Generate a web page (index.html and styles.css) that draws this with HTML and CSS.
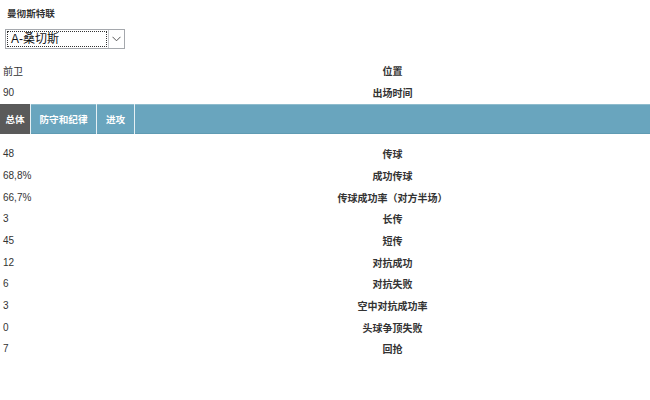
FILE: index.html
```html
<!DOCTYPE html>
<html lang="zh">
<head>
<meta charset="utf-8">
<link rel="stylesheet" href="styles.css">
</head>
<body>
<div class="head">
  <div class="team">曼彻斯特联</div>
  <div class="select">
    <div class="sel-text">A-桑切斯</div>
    <div class="sel-btn">
      <svg width="9" height="6" viewBox="0 0 9 6"><path d="M0.5 0.8 L4.5 4.8 L8.5 0.8" fill="none" stroke="#555" stroke-width="1"/></svg>
    </div>
  </div>
</div>
<div class="info">
  <div class="row"><div class="val">前卫</div><div class="lab">位置</div></div>
  <div class="row"><div class="val">90</div><div class="lab">出场时间</div></div>
</div>
<div class="tabs">
  <div class="tab active">总体</div>
  <div class="tab t2">防守和纪律</div>
  <div class="tab t3">进攻</div>
</div>
<div class="stats">
  <div class="row"><div class="val">48</div><div class="lab">传球</div></div>
  <div class="row"><div class="val">68,8%</div><div class="lab">成功传球</div></div>
  <div class="row"><div class="val">66,7%</div><div class="lab">传球成功率（对方半场）</div></div>
  <div class="row"><div class="val">3</div><div class="lab">长传</div></div>
  <div class="row"><div class="val">45</div><div class="lab">短传</div></div>
  <div class="row"><div class="val">12</div><div class="lab">对抗成功</div></div>
  <div class="row"><div class="val">6</div><div class="lab">对抗失败</div></div>
  <div class="row"><div class="val">3</div><div class="lab">空中对抗成功率</div></div>
  <div class="row"><div class="val">0</div><div class="lab">头球争顶失败</div></div>
  <div class="row"><div class="val">7</div><div class="lab">回抢</div></div>
</div>
</body>
</html>
```
FILE: styles.css
```css
html, body {
  margin: 0;
  padding: 0;
  background: #fff;
}
body {
  font-family: "Liberation Sans", "Noto Sans CJK SC", sans-serif;
  font-size: 10px;
  color: #333;
  width: 650px;
}
.head {
  padding: 7px 0 0 5px;
}
.team {
  padding-left: 2px;
  font-weight: bold;
  line-height: 14px;
  height: 14px;
  font-size: 9.6px;
}
.select {
  margin-top: 8px;
  width: 118px;
  height: 18px;
  border: 1px solid #a5a8ad;
  display: flex;
  align-items: stretch;
}
.sel-text {
  flex: 1;
  margin: 1px;
  border: 1px dotted #333;
  font-size: 12px;
  line-height: 14px;
  padding-left: 3px;
  color: #111;
}
.sel-btn {
  width: 15px;
  border-left: 1px solid #c6c8cc;
  display: flex;
  align-items: center;
  justify-content: center;
}
.info {
  margin-top: 10px;
}
.row {
  display: flex;
  align-items: center;
  height: 22px;
}
.val {
  width: 132px;
  padding-left: 3px;
}
.lab {
  flex: 1;
  text-align: center;
  font-weight: bold;
}
.tabs {
  margin-top: 1px;
  height: 30px;
  background: #69a5be;
  border-top: 1px solid #8fbccd;
  border-bottom: 1px solid #5f9bb3;
  box-sizing: border-box;
  display: flex;
}
.tab {
  color: #fff;
  font-weight: bold;
  font-size: 9.6px;
  display: flex;
  align-items: center;
  justify-content: center;
  border-right: 1px solid #e6f0f4;
  margin-top: -1px;
  margin-bottom: -1px;
}
.tab.active {
  background: #5a5a5a;
  width: 30px;
}
.tab.t2 {
  width: 65px;
}
.tab.t3 {
  width: 37px;
}
.stats {
  margin-top: 9px;
}
.stats .row {
  height: 21.67px;
}
```
